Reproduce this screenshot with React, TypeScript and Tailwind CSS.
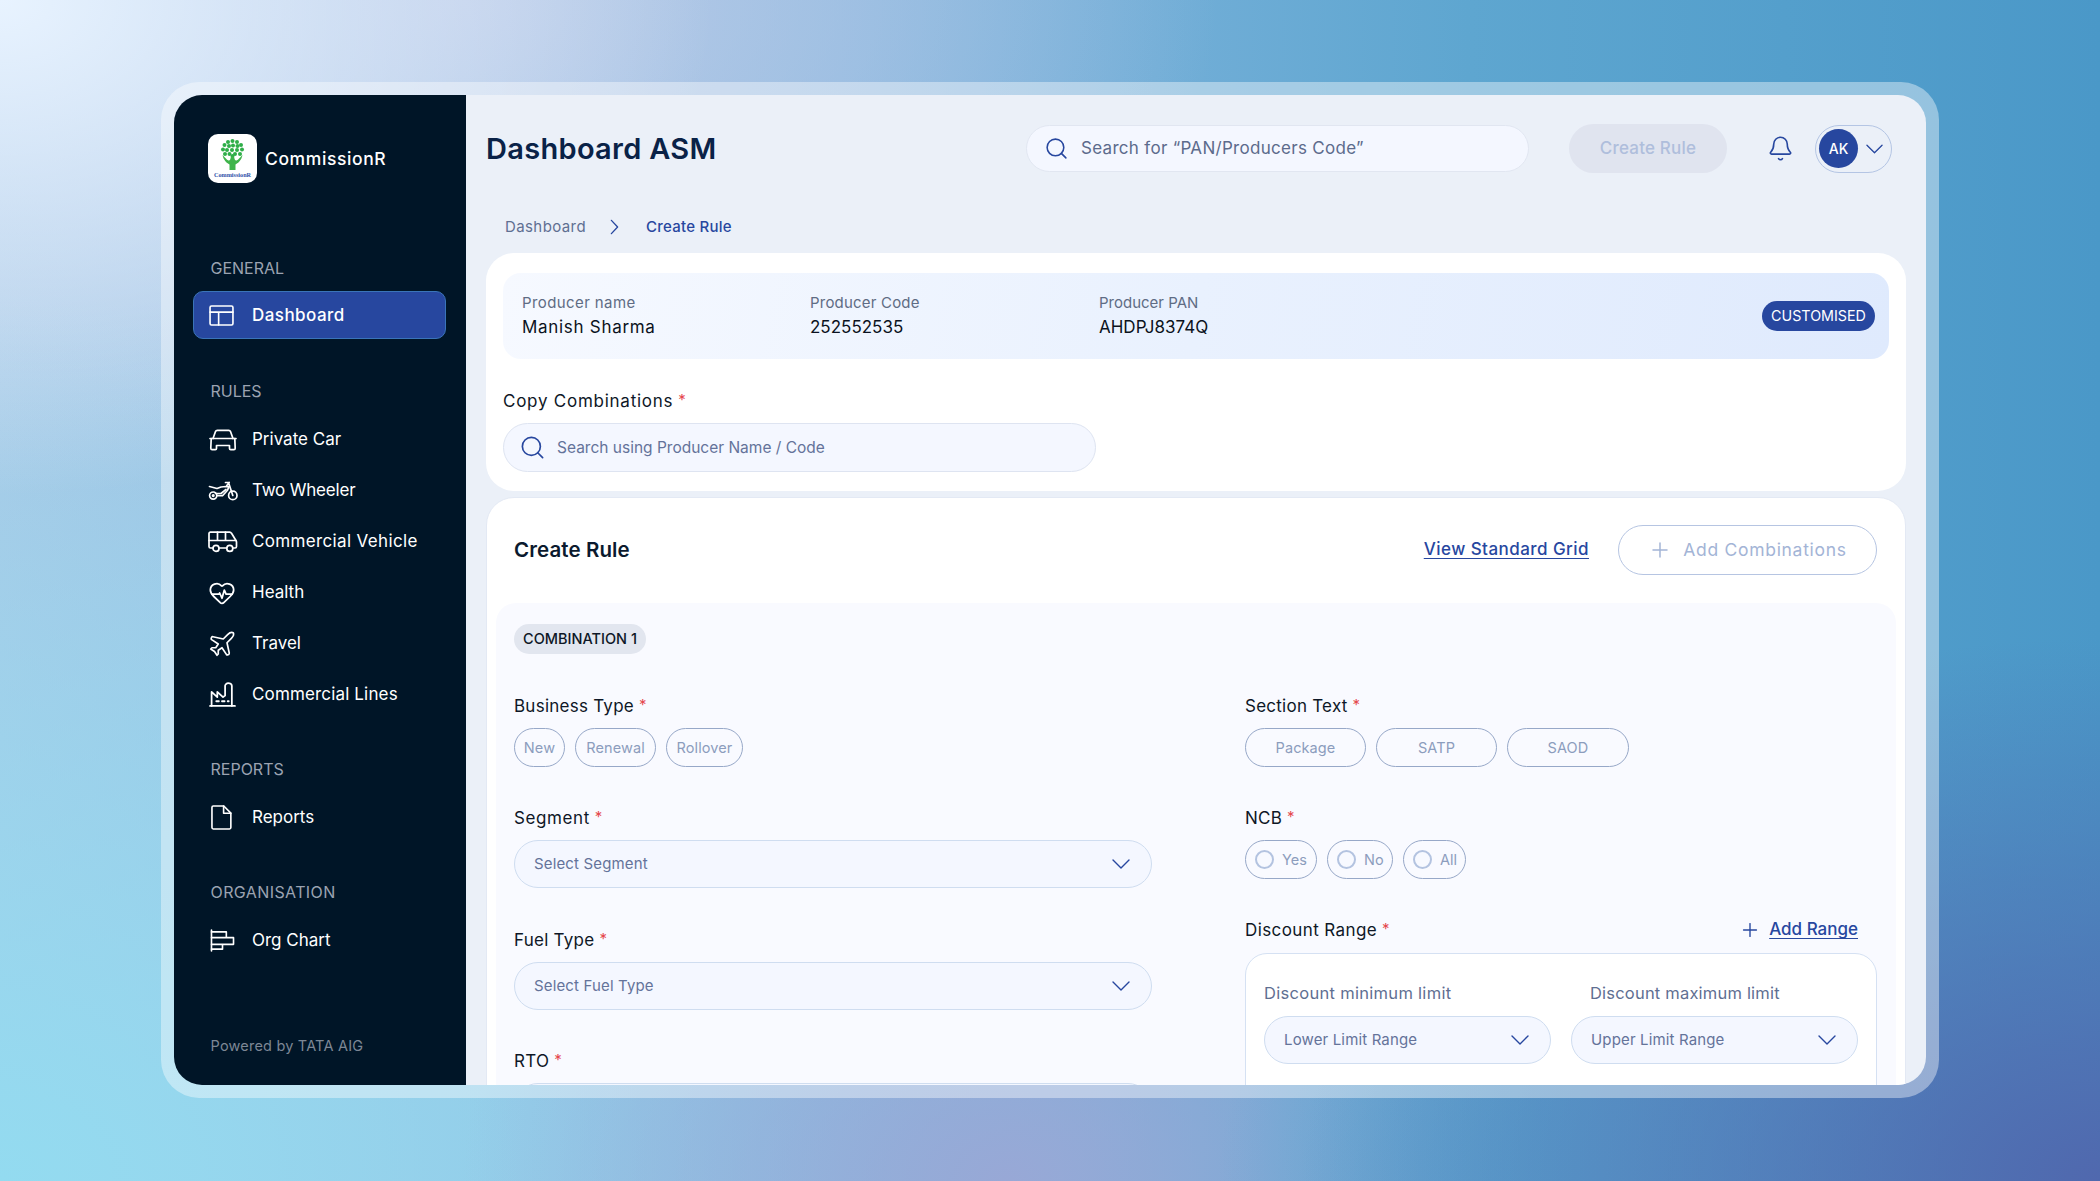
import React from "react";
import { Search, Bell, Plus, HeartPulse, Plane } from "lucide-react";

const Chev = ({ className = "" }: { className?: string }) => (
  <svg viewBox="0 0 18 10" className={"w-[18px] h-[10px] shrink-0 " + className} fill="none" stroke="#27479F" strokeWidth="1.4" strokeLinecap="round" strokeLinejoin="round">
    <path d="M1 1l8 8 8-8" />
  </svg>
);

const Star = () => <span className="text-[#E5484D] ml-[5px] text-[15px] relative -top-[2px]">*</span>;

const Label = ({ children, className = "tracking-[0.25px]" }: { children: React.ReactNode; className?: string }) => (
  <div className={"h-[24px] leading-[24px] text-[17px] text-[#0E1726] mb-[10px] " + className}>{children}<Star /></div>
);

const Chip = ({ children, className = "" }: { children: React.ReactNode; className?: string }) => (
  <div className={"h-[39px] rounded-full border-[1.5px] border-[#97A8C8] flex items-center justify-center text-[14.5px] tracking-[0.1px] text-[#8C9DBD] " + className}>{children}</div>
);

const Radio = ({ t, w }: { t: string; w: string }) => (
  <div className={"h-[39px] rounded-full border-[1.5px] border-[#97A8C8] flex items-center pl-[9px] gap-[8px] text-[14.5px] text-[#8C9DBD] " + w}>
    <span className="w-[19px] h-[19px] rounded-full border-[2.5px] border-[#B3C3E0] bg-[#F7F9FF] shrink-0" />
    {t}
  </div>
);

const Select = ({ t, className = "" }: { t: string; className?: string }) => (
  <div className={"h-[48px] rounded-full border-[1.5px] border-[#CFDDF0] bg-[#F4F7FF] flex items-center justify-between pl-[19px] pr-[21px] text-[15px] tracking-[0.15px] text-[#64739A] " + className}>
    <span>{t}</span>
    <Chev />
  </div>
);

const stroke = { fill: "none", stroke: "currentColor", strokeWidth: 1.7, strokeLinecap: "round" as const, strokeLinejoin: "round" as const };

const TableIcon = () => (
  <svg viewBox="0 0 26 22" className="w-[25px] h-[21px]" {...stroke}>
    <rect x="1" y="1" width="24" height="20" rx="1.5" />
    <path d="M1 7.5h24M10 7.5V21" />
  </svg>
);
const CarIcon = () => (
  <svg viewBox="0 0 28 22" className="w-[28px] h-[22px] ml-[1px]" {...stroke}>
    <path d="M4 9.500 6.500 2.500c.3-.8 1-1.200 1.800-1.200h11.400c.8 0 1.500.4 1.800 1.200L24 9.500" />
    <path d="M1 9.500h26" />
    <path d="M2.200 9.500 1.800 19.200c0 .9.5 1.400 1.300 1.400h3.200c.8 0 1.200-.5 1.200-1.200V16.500h13v2.900c0 .7.4 1.200 1.200 1.200h3.200c.8 0 1.300-.5 1.300-1.400L25.800 9.500" />
  </svg>
);
const BikeIcon = () => (
  <svg viewBox="0 0 30 20" className="w-[30px] h-[20px]" {...stroke}>
    <circle cx="5.200" cy="14.600" r="3.600" />
    <circle cx="5.200" cy="14.600" r=".7" />
    <circle cx="24.800" cy="14.400" r="4.200" />
    <path d="M1.500 5.500 9 7.500l4-1.500 5-.5 3 .2-1.500 3.500-5 5.500H9" />
    <path d="M7.500 12.500h5.500l5-4" />
    <path d="M17.500 1.500h3l4.300 12.900M18.800 4.500l2.400-3" />
  </svg>
);
const VanIcon = () => (
  <svg viewBox="0 0 30 22" className="w-[30px] h-[22px]" {...stroke}>
    <path d="M4.800 17H2.400c-.8 0-1.400-.6-1.400-1.400V2.600C1 1.800 1.600 1.200 2.400 1.200h19.200c.8 0 1.500.4 1.900 1.100l4.600 7.400c.3.5.4.9.4 1.400v4.500c0 .8-.6 1.400-1.400 1.400h-1.800" />
    <path d="M1 9.500h27M9.500 1.200v8.300M17.500 1.200v8.300M11.500 17h7" />
    <circle cx="8" cy="17.400" r="3" />
    <circle cx="21.800" cy="17.400" r="3" />
  </svg>
);
const FactoryIcon = () => (
  <svg viewBox="0 0 26 24" className="w-[27px] h-[25px] ml-[1px]" {...stroke}>
    <path d="M1 23h24" />
    <path d="M2.500 23V9.500l5.500 5v-5l5.500 5 2-1.500V3.500c0-.9 1.300-2.500 3-2.500s3.500 1 3.500 2.500V23" />
    <path d="M7 18.500h2.500M12.500 18.500H15M18 18.500h1" />
  </svg>
);
const DocIcon = () => (
  <svg viewBox="0 0 22 26" className="w-[21px] h-[25px] ml-[3px]" {...stroke}>
    <path d="M2.400 1h11l7.400 7.400v15.200c0 .8-.6 1.400-1.400 1.400h-17c-.8 0-1.400-.6-1.400-1.400V2.400C1 1.600 1.600 1 2.400 1Z" />
    <path d="M13.200 1v7.600h7.600" />
  </svg>
);
const OrgIcon = () => (
  <svg viewBox="0 0 26 24" className="w-[25px] h-[23px] ml-[2px]" {...stroke}>
    <path d="M1.500 1v22" />
    <path d="M1.500 3H17V9M1.500 9H24.500V16H1.500M13 16V21H1.500" />
  </svg>
);

const Logo = () => (
  <div className="w-[49px] h-[49px] rounded-[10px] bg-white shrink-0">
    <svg viewBox="0 0 49 49" className="w-[49px] h-[49px]">
      <g fill="#2FAE49">
        {[[24.5,7],[20,8],[29,8],[16.5,11],[21,12],[25,11.5],[29.5,12],[33,11],[15,15.5],[19,16],[24,16],[29,16],[34,15.5],[17,20],[21.5,20],[27,20],[32,20],[24.5,22]].map(([x, y], i) => (
          <circle key={i} cx={x} cy={y} r="2" />
        ))}
      </g>
      <path d="M14.500 21c1 5 4 8 7 9.500V36h6v-5.500c3-1.500 6-4.500 7-9.500-2.500 2-4 5-6 5.500-1.500.3-2-1.500-2.500-4h-3c-.5 2.500-1 4.300-2.500 4-2-.5-3.500-3.500-6-5.500Z" fill="#3FB44B" />
      <text x="24.500" y="43" textAnchor="middle" fontFamily="'Liberation Serif', serif" fontWeight="700" fontSize="6.2" fill="#2F4FA8">CommissionR</text>
    </svg>
  </div>
);

const Heading = ({ t, className = "" }: { t: string; className?: string }) => (
  <div className={"h-[24px] leading-[24px] pl-[36.500px] text-[16px] text-[#9BA3B1] " + className}>{t}</div>
);

const NavItem = ({ icon, t, track = "" }: { icon: React.ReactNode; t: string; track?: string }) => (
  <div className="h-[51px] flex items-center pl-[34px] text-[17px] text-white">
    <span className="w-[44px] flex items-center">{icon}</span>
    <span className={track}>{t}</span>
  </div>
);

export default function App() {
  return (
    <div
      className="w-[2100px] h-[1181px] flex justify-center pt-[82px] overflow-hidden font-['Inter',sans-serif] bg-[radial-gradient(ellipse_34%_42%_at_0%_0%,#E8F3FF_0%,#E8F3FF00_100%),radial-gradient(ellipse_38%_46%_at_100%_100%,#5068AE_0%,#5068AE00_100%),radial-gradient(ellipse_18%_28%_at_76%_100%,#58A2CE_0%,#58A2CE00_100%),radial-gradient(ellipse_26%_34%_at_48%_100%,#98A8D6_0%,#98A8D600_100%),radial-gradient(ellipse_55%_75%_at_0%_100%,#93DBF0_0%,#93DBF000_100%),radial-gradient(ellipse_36%_40%_at_22%_0%,#BBCBE8_0%,#BBCBE800_100%),linear-gradient(90deg,#A9C9E6_0%,#86B6DE_40%,#5EA6D0_70%,#4A98C8_100%)]"
    >
      <div className="w-[1778px] h-[1016px] p-[13px] rounded-[38px] bg-white/40">
        <div className="h-full flex rounded-[28px] overflow-hidden">
          {/* Sidebar */}
          <aside className="w-[292px] shrink-0 bg-[#001527] flex flex-col">
            <div className="flex items-center pl-[34px] pt-[39px] gap-[8px] h-[88px]">
              <Logo />
              <span className="text-white text-[17.500px] font-medium tracking-[0.6px] relative top-[1px]">CommissionR</span>
            </div>
            <Heading t="GENERAL" className="mt-[73px]" />
            <div className="ml-[19px] mr-[20px] mt-[11px] h-[48px] rounded-[10px] bg-[#27479F] border border-[#3A74B8] flex items-center pl-[15px] text-white text-[17px] font-medium">
              <span className="w-[43px] flex items-center"><TableIcon /></span>
              <span className="tracking-[0.45px] relative top-[1px]">Dashboard</span>
            </div>
            <Heading t="RULES" className="mt-[40px]" />
            <div className="mt-[11px]">
              <NavItem icon={<CarIcon />} t="Private Car" />
              <NavItem icon={<BikeIcon />} t="Two Wheeler" track="tracking-[-0.2px]" />
              <NavItem icon={<VanIcon />} t="Commercial Vehicle" track="tracking-[0.35px]" />
              <NavItem icon={<HeartPulse size={28} strokeWidth={1.5} />} t="Health" />
              <NavItem icon={<Plane size={30} strokeWidth={1.35} className="-ml-[1px]" />} t="Travel" />
              <NavItem icon={<FactoryIcon />} t="Commercial Lines" track="tracking-[0.15px]" />
            </div>
            <Heading t="REPORTS" className="mt-[37px]" />
            <div className="mt-[11px]">
              <NavItem icon={<DocIcon />} t="Reports" />
            </div>
            <Heading t="ORGANISATION" className="mt-[37px] tracking-[0.4px]" />
            <div className="mt-[11px]">
              <NavItem icon={<OrgIcon />} t="Org Chart" />
            </div>
            <div className="mt-[69px] pl-[36.500px] text-[14.500px] tracking-[0.2px] text-[#7D8795]">Powered by TATA AIG</div>
          </aside>

          {/* Main */}
          <main className="flex-1 min-w-0 bg-[#EBF0F8] px-[20px] pt-[29px] overflow-hidden">
            <header className="flex items-center h-[49px] pr-[14px]">
              <h1 className="text-[29px] font-semibold text-[#0A2247] tracking-[0.3px]">Dashboard ASM</h1>
              <div className="ml-auto w-[503px] shrink-0 h-[47px] rounded-full bg-[#F4F7FF] border-[1.5px] border-[#E1E6F1] flex items-center pl-[17px] gap-[12px] text-[17px] tracking-[0.3px] text-[#5C6B8C]">
                <Search size={25} strokeWidth={1.5} className="text-[#27479F]" />
                <span>Search for “PAN/Producers Code”</span>
              </div>
              <div className="ml-[40px] w-[158px] h-[49px] rounded-full bg-[#E0E4EF] flex items-center justify-center text-[17px] font-medium tracking-[0.2px] text-[#AFBEDC]">Create Rule</div>
              <Bell size={27} strokeWidth={1.45} className="ml-[40px] text-[#27479F]" />
              <div className="ml-[21px] w-[77px] h-[48px] rounded-full border-[1.5px] border-[#B4C5E4] flex items-center pl-[3px]">
                <div className="w-[39px] h-[39px] rounded-full bg-[#27479F] text-white text-[14px] font-medium flex items-center justify-center">AK</div>
                <Chev className="ml-[8px] !w-[17px]" />
              </div>
            </header>

            <nav className="mt-[44px] h-[20px] pl-[19px] flex items-center text-[15px] text-[#5F6F92]">
              <span className="tracking-[0.4px]">Dashboard</span>
              <svg viewBox="0 0 10 18" className="w-[9px] h-[16px] ml-[24px] mr-[27px]" fill="none" stroke="#27479F" strokeWidth="1.5" strokeLinecap="round" strokeLinejoin="round"><path d="M1.500 1.500 8.500 9l-7 7.500" /></svg>
              <span className="text-[#27479F] font-medium tracking-[0.25px]">Create Rule</span>
            </nav>

            {/* Card 1 */}
            <section className="mt-[16px] h-[238px] rounded-[28px] bg-white px-[17px] pt-[20px]">
              <div className="h-[86px] rounded-[18px] bg-[linear-gradient(100deg,#F6F9FF_0%,#E9F1FE_50%,#DFEAFD_100%)] flex items-center pl-[19px] pr-[14px]">
                <div className="w-[288px]">
                  <div className="text-[15px] text-[#5F6C84] leading-[20px] tracking-[0.4px]">Producer name</div>
                  <div className="text-[17px] text-[#0B1220] leading-[24px] mt-[2px] tracking-[0.7px]">Manish Sharma</div>
                </div>
                <div className="w-[289px]">
                  <div className="text-[15px] text-[#5F6C84] leading-[20px] tracking-[0.2px]">Producer Code</div>
                  <div className="text-[17px] text-[#0B1220] leading-[24px] mt-[2px]">252552535</div>
                </div>
                <div>
                  <div className="text-[15px] text-[#5F6C84] leading-[20px]">Producer PAN</div>
                  <div className="text-[17px] text-[#0B1220] leading-[24px] mt-[2px]">AHDPJ8374Q</div>
                </div>
                <div className="ml-auto w-[113px] h-[30px] rounded-full bg-[#27479F] text-white text-[14.300px] flex items-center justify-center">CUSTOMISED</div>
              </div>
              <div className="mt-[30px]"><Label className="tracking-[0.75px]">Copy Combinations</Label></div>
              <div className="w-[593px] h-[49px] rounded-full bg-[#F4F7FF] border-[1.5px] border-[#DEE4F1] flex items-center pl-[15px] gap-[11px] text-[15.500px] text-[#64739A]">
                <Search size={27} strokeWidth={1.5} className="text-[#27479F]" />
                <span>Search using Producer Name / Code</span>
              </div>
            </section>

            {/* Card 2 */}
            <section className="mt-[6px] h-[700px] rounded-[28px] bg-white border border-[#E3E9F4] px-[9px] pt-[27px]">
              <div className="h-[50px] flex items-center pl-[18px] pr-[19px]">
                <h2 className="text-[20.500px] font-semibold text-[#0B1A2E] tracking-[0.1px]">Create Rule</h2>
                <span className="ml-auto text-[17px] font-medium text-[#27479F] tracking-[0.45px] underline underline-offset-[3px]">View Standard Grid</span>
                <div className="ml-[29px] w-[259px] h-[50px] rounded-full border-[1.5px] border-[#B6C5E2] flex items-center justify-center gap-[11px] text-[17.500px] tracking-[0.7px] text-[#A3B4D6]">
                  <Plus size={24} strokeWidth={1.5} />
                  <span>Add Combinations</span>
                </div>
              </div>
              <div className="mt-[28px] rounded-[20px] bg-[#F9FAFF] px-[18px] pt-[21px] h-[600px]">
                <div className="inline-flex h-[30px] w-[132px] items-center justify-center rounded-full bg-[#E2E6EF] text-[14.500px] font-medium text-[#0E1726]">COMBINATION 1</div>
                <div className="mt-[40px] flex justify-between pr-[1px]">
                  <div className="w-[638px]">
                    <Label>Business Type</Label>
                    <div className="flex gap-[10px]">
                      <Chip className="w-[51px]">New</Chip>
                      <Chip className="w-[81px]">Renewal</Chip>
                      <Chip className="w-[77px]">Rollover</Chip>
                    </div>
                    <div className="mt-[39px]"><Label className="tracking-[0.6px]">Segment</Label></div>
                    <Select t="Select Segment" />
                    <div className="mt-[40px]"><Label>Fuel Type</Label></div>
                    <Select t="Select Fuel Type" />
                    <div className="mt-[39px]"><Label>RTO</Label></div>
                    <Select t="" />
                  </div>
                  <div className="w-[632px]">
                    <Label>Section Text</Label>
                    <div className="flex gap-[10px]">
                      <Chip className="w-[121px]">Package</Chip>
                      <Chip className="w-[121px]">SATP</Chip>
                      <Chip className="w-[122px]">SAOD</Chip>
                    </div>
                    <div className="mt-[39px]"><Label>NCB</Label></div>
                    <div className="flex gap-[10px]">
                      <Radio t="Yes" w="w-[72px]" />
                      <Radio t="No" w="w-[66px]" />
                      <Radio t="All" w="w-[63px]" />
                    </div>
                    <div className="mt-[39px] flex items-start justify-between pr-[19px]">
                      <Label className="tracking-[0.4px]">Discount Range</Label>
                      <div className="flex items-center h-[24px] gap-[8px] text-[17px] font-medium text-[#27479F]">
                        <Plus size={22} strokeWidth={1.5} />
                        <span className="underline underline-offset-[3px]">Add Range</span>
                      </div>
                    </div>
                    <div className="mt-[1px] rounded-[22px] border-[1.5px] border-[#D5E1F3] bg-white px-[18px] pt-[27px] h-[200px]">
                      <div className="grid grid-cols-2 gap-x-[20px]">
                        <div className="h-[24px] leading-[24px] text-[16.500px] tracking-[0.3px] text-[#5F6F92]">Discount minimum limit</div>
                        <div className="h-[24px] leading-[24px] pl-[19px] text-[16.500px] tracking-[0.2px] text-[#5F6F92]">Discount maximum limit</div>
                        <Select t="Lower Limit Range" className="mt-[11px]" />
                        <Select t="Upper Limit Range" className="mt-[11px]" />
                      </div>
                    </div>
                  </div>
                </div>
              </div>
            </section>
          </main>
        </div>
      </div>
    </div>
  );
}
